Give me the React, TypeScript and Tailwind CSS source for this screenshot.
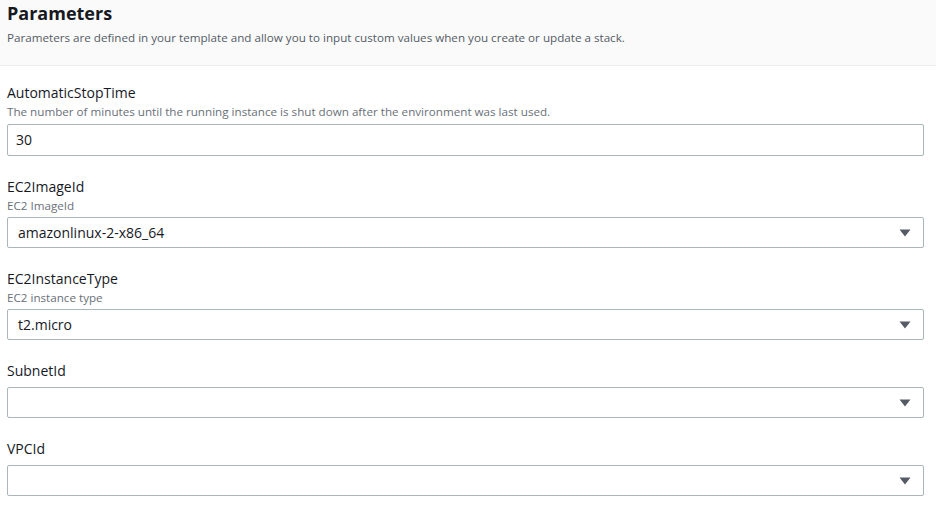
import { ReactNode } from "react";

type Field = {
  name: string;
  description?: string;
  value: string;
  kind: "input" | "select";
};

const fields: Field[] = [
  {
    name: "AutomaticStopTime",
    description:
      "The number of minutes until the running instance is shut down after the environment was last used.",
    value: "30",
    kind: "input",
  },
  { name: "EC2ImageId", description: "EC2 ImageId", value: "amazonlinux-2-x86_64", kind: "select" },
  { name: "EC2InstanceType", description: "EC2 instance type", value: "t2.micro", kind: "select" },
  { name: "SubnetId", value: "", kind: "select" },
  { name: "VPCId", value: "", kind: "select" },
];

function Caret() {
  return (
    <svg width="12" height="8" viewBox="0 0 12 8" className="shrink-0">
      <path d="M0.5 0.5 H11.5 L6 7.5 Z" fill="#545b64" />
    </svg>
  );
}

function FieldRow({ field }: { field: Field }) {
  let control: ReactNode;
  if (field.kind === "input") {
    control = (
      <div className="mt-1 flex h-8 items-center rounded-[2px] border border-[#aab7b8] bg-white px-2 text-sm text-[#16191f]">
        {field.value}
      </div>
    );
  } else {
    control = (
      <div
        className={
          field.description
            ? "mt-[3px] flex h-[31px] items-center justify-between rounded-[2px] border border-[#aab7b8] bg-white pl-[10px] pr-3 text-sm text-[#16191f]"
            : "mt-[6px] flex h-[31px] items-center justify-between rounded-[2px] border border-[#aab7b8] bg-white pl-[10px] pr-3 text-sm text-[#16191f]"
        }
      >
        <span>{field.value}</span>
        <Caret />
      </div>
    );
  }

  return (
    <div>
      <div className="text-sm leading-5 text-[#16191f]">{field.name}</div>
      {field.description && (
        <div className="mt-[1px] text-[11.65px] leading-4 text-[#687078]">{field.description}</div>
      )}
      {control}
    </div>
  );
}

export default function App() {
  return (
    <div
      className="h-[512px] w-[936px] overflow-hidden bg-white"
      style={{ fontFamily: '"Open Sans", "Liberation Sans", sans-serif' }}
    >
      <div className="h-[66px] border-b border-[#eaeded] bg-[#fafafa] px-[7px] pt-[2px]">
        <h2 className="text-lg font-bold leading-[22px] text-[#16191f]">Parameters</h2>
        <p className="mt-[6px] text-[11.65px] leading-4 text-[#545b64]">
          Parameters are defined in your template and allow you to input custom values when you create or update a stack.
        </p>
      </div>
      <div className="flex flex-col gap-[21px] pl-[7px] pr-3 pt-[17px]">
        {fields.map((f) => (
          <FieldRow key={f.name} field={f} />
        ))}
      </div>
    </div>
  );
}
